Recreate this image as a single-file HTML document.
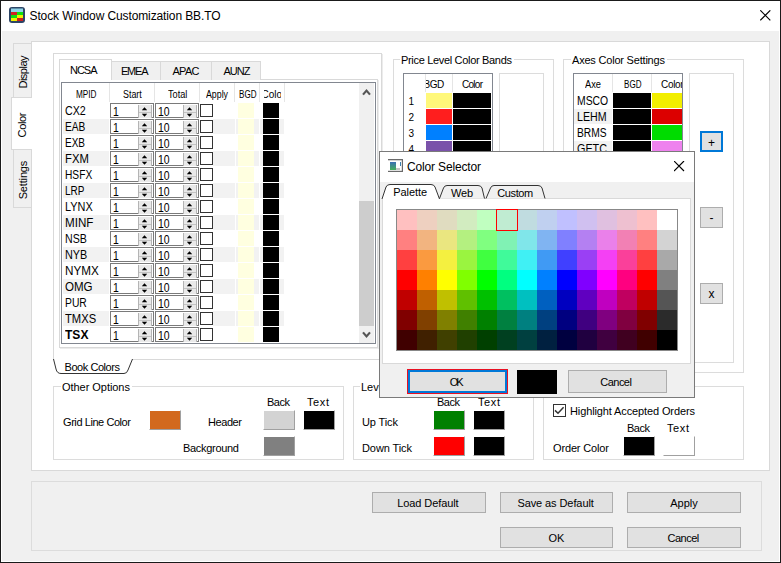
<!DOCTYPE html>
<html><head><meta charset="utf-8"><style>
html,body{margin:0;padding:0;}
body{width:781px;height:563px;position:relative;overflow:hidden;font-family:"Liberation Sans",sans-serif;background:#f0f0f0;}
body>div,body>svg{position:absolute;}
.t{position:absolute;white-space:nowrap;}
</style></head><body>
<div style="left:0px;top:0px;width:781px;height:563px;background:#f0f0f0;"></div>
<div style="left:0px;top:0px;width:781px;height:31px;background:#fff;"></div>
<div style="left:0px;top:0px;width:781px;height:563px;box-sizing:border-box;border:1px solid #1a1a1a;"></div>
<div style="left:1px;top:31px;width:1px;height:531px;background:#fff;"></div>
<div style="left:779px;top:31px;width:1px;height:531px;background:#fff;"></div>
<div style="left:1px;top:561px;width:779px;height:1px;background:#fff;"></div>
<svg style="left:9px;top:7px" width="16" height="16" viewBox="0 0 16 16">
<rect x="0" y="0" width="16" height="16" rx="3" fill="#2d4566"/>
<rect x="2" y="1.5" width="12" height="3.5" fill="#8fd3e8"/>
<rect x="2" y="5" width="6" height="3" fill="#d42020"/><rect x="8" y="5" width="6" height="3" fill="#10e010"/>
<rect x="2" y="8" width="6" height="3" fill="#10e010"/><rect x="8" y="8" width="6" height="3" fill="#f0f000"/>
<rect x="2" y="11" width="6" height="3" fill="#f0f000"/><rect x="8" y="11" width="6" height="3" fill="#c82020"/>
</svg>
<div class="t" style="left:29.50px;top:7.84px;font-size:12px;line-height:16px;color:#000;letter-spacing:-0.112px;">Stock Window Customization BB.TO</div>
<svg style="left:760px;top:10px" width="11" height="11" viewBox="0 0 11 11"><path d="M0.3 0.3L10.3 10.3M10.3 0.3L0.3 10.3" stroke="#000" stroke-width="1.15"/></svg>
<div style="left:13px;top:43px;width:19px;height:55px;background:#f0f0f0;box-sizing:border-box;border:1px solid #d9d9d9;"></div>
<div style="left:13px;top:148px;width:19px;height:60px;background:#f0f0f0;box-sizing:border-box;border:1px solid #d9d9d9;"></div>
<div style="left:31px;top:41px;width:739px;height:430px;background:#fff;box-sizing:border-box;border:1px solid #d9d9d9;"></div>
<div style="left:11px;top:97px;width:21px;height:53px;background:#fff;box-sizing:border-box;border:1px solid #d9d9d9;border-right:none;"></div>
<div class="t" style="left:-37px;top:63.5px;width:120px;text-align:center;font-size:11px;line-height:16px;letter-spacing:-0.509px;text-indent:-0.509px;transform:rotate(-90deg);">Display</div>
<div class="t" style="left:-38px;top:116.5px;width:120px;text-align:center;font-size:11px;line-height:16px;letter-spacing:-0.356px;text-indent:-0.356px;transform:rotate(-90deg);">Color</div>
<div class="t" style="left:-37px;top:172px;width:120px;text-align:center;font-size:11px;line-height:16px;letter-spacing:-0.160px;text-indent:-0.160px;transform:rotate(-90deg);">Settings</div>
<div style="left:53px;top:53px;width:329px;height:307px;box-sizing:border-box;border:1px solid #d9d9d9;border-bottom:none;"></div>
<div style="left:382px;top:54px;width:1px;height:306px;background:#ececec;"></div>
<div style="left:131px;top:359px;width:251px;height:1px;background:#d9d9d9;"></div>
<svg style="left:50px;top:355px" width="90" height="22" viewBox="0 0 90 22"><path d="M3.5 4 L6 14 Q7 18.5 11 18.5 L74 18.5 Q77 18.5 78 15 L82.5 4" fill="#fff" stroke="#333" stroke-width="1"/></svg>
<div class="t" style="left:64.50px;top:359.69px;font-size:11px;line-height:15px;color:#000;letter-spacing:-0.444px;">Book Colors</div>
<div style="left:59px;top:79px;width:319px;height:269px;box-sizing:border-box;border:1px solid #d9d9d9;"></div>
<div style="left:378px;top:80px;width:1px;height:269px;background:#ececec;"></div>
<div style="left:60px;top:348px;width:319px;height:1px;background:#ececec;"></div>
<div style="left:111px;top:61px;width:50px;height:19px;background:#f0f0f0;box-sizing:border-box;border:1px solid #d9d9d9;border-bottom:none;"></div>
<div style="left:160px;top:61px;width:52px;height:19px;background:#f0f0f0;box-sizing:border-box;border:1px solid #d9d9d9;border-bottom:none;"></div>
<div style="left:211px;top:61px;width:50px;height:19px;background:#f0f0f0;box-sizing:border-box;border:1px solid #d9d9d9;border-bottom:none;"></div>
<div style="left:59px;top:59px;width:53px;height:21px;background:#fff;box-sizing:border-box;border:1px solid #d9d9d9;border-bottom:none;"></div>
<div class="t" style="left:70.00px;top:63.19px;font-size:11px;line-height:15px;color:#000;letter-spacing:-1.021px;">NCSA</div>
<div class="t" style="left:121.00px;top:63.69px;font-size:11px;line-height:15px;color:#000;letter-spacing:-1.229px;">EMEA</div>
<div class="t" style="left:172.50px;top:63.69px;font-size:11px;line-height:15px;color:#000;letter-spacing:-0.719px;">APAC</div>
<div class="t" style="left:223.50px;top:63.69px;font-size:11px;line-height:15px;color:#000;letter-spacing:-0.979px;">AUNZ</div>
<div style="left:61px;top:82px;width:315px;height:262px;background:#fff;box-sizing:border-box;border:1px solid #828790;"></div>
<div style="left:109px;top:83px;width:1px;height:19px;background:#e5e5e5;"></div>
<div style="left:154px;top:83px;width:1px;height:19px;background:#e5e5e5;"></div>
<div style="left:199px;top:83px;width:1px;height:19px;background:#e5e5e5;"></div>
<div style="left:234px;top:83px;width:1px;height:19px;background:#e5e5e5;"></div>
<div style="left:259px;top:83px;width:1px;height:19px;background:#e5e5e5;"></div>
<div style="left:284px;top:83px;width:1px;height:19px;background:#e5e5e5;"></div>
<div class="t" style="left:75.60px;top:87.53px;font-size:10px;line-height:14px;color:#000;transform:scaleX(0.82);transform-origin:0 0;">MPID</div>
<div class="t" style="left:123.40px;top:87.53px;font-size:10px;line-height:14px;color:#000;transform:scaleX(0.8899408284023669);transform-origin:0 0;">Start</div>
<div class="t" style="left:167.60px;top:87.53px;font-size:10px;line-height:14px;color:#000;transform:scaleX(0.9183431952662722);transform-origin:0 0;">Total</div>
<div class="t" style="left:206.30px;top:87.53px;font-size:10px;line-height:14px;color:#000;transform:scaleX(0.8794503435352904);transform-origin:0 0;">Apply</div>
<div class="t" style="left:239.00px;top:87.53px;font-size:10px;line-height:14px;color:#000;transform:scaleX(0.8074981975486661);transform-origin:0 0;">BGD</div>
<div style="left:264px;top:83px;width:17px;height:18px;overflow:hidden"><div class="t" style="left:-2.5px;top:5px;font-size:10px;line-height:14px;letter-spacing:0px">Color</div></div>
<div class="t" style="left:65.20px;top:102.84px;font-size:12px;line-height:16px;color:#000;transform:scaleX(0.8910307898259706);transform-origin:0 0;">CX2</div>
<div style="left:110px;top:103px;width:44px;height:15px;background:#fff;box-sizing:border-box;border:1px solid #7a7a7a;"></div>
<div style="left:138px;top:105px;width:14px;height:13px;background:#e9e9e9;border-left:1px solid #b4b4b4;border-right:1px solid #b4b4b4;box-sizing:border-box;"></div>
<div style="left:139px;top:112px;width:12px;height:1px;background:#c4c4c4;"></div>
<svg style="left:142px;top:107px" width="5" height="10" viewBox="0 0 5 10"><path d="M-0.2 3.2L5.2 3.2L2.5 0.2Z M-0.2 6.8L5.2 6.8L2.5 9.8Z" fill="#000"/></svg>
<div class="t" style="left:112.50px;top:103.84px;font-size:12px;line-height:16px;color:#000;transform:scaleX(0.87);transform-origin:0 0;">1</div>
<div style="left:155px;top:103px;width:44px;height:15px;background:#fff;box-sizing:border-box;border:1px solid #7a7a7a;"></div>
<div style="left:183px;top:105px;width:14px;height:13px;background:#e9e9e9;border-left:1px solid #b4b4b4;border-right:1px solid #b4b4b4;box-sizing:border-box;"></div>
<div style="left:184px;top:112px;width:12px;height:1px;background:#c4c4c4;"></div>
<svg style="left:187px;top:107px" width="5" height="10" viewBox="0 0 5 10"><path d="M-0.2 3.2L5.2 3.2L2.5 0.2Z M-0.2 6.8L5.2 6.8L2.5 9.8Z" fill="#000"/></svg>
<div class="t" style="left:157.50px;top:103.84px;font-size:12px;line-height:16px;color:#000;transform:scaleX(0.87);transform-origin:0 0;">10</div>
<div style="left:200px;top:104px;width:13px;height:13px;background:#fff;box-sizing:border-box;border:1px solid #333;"></div>
<div style="left:238px;top:103px;width:16px;height:15px;background:#ffffe0;"></div>
<div style="left:263px;top:103px;width:16px;height:15px;background:#000;"></div>
<div style="left:63px;top:119px;width:46px;height:15px;background:#f2f2f2;"></div>
<div style="left:213px;top:119px;width:22px;height:15px;background:#f2f2f2;"></div>
<div style="left:236px;top:119px;width:23px;height:15px;background:#f2f2f2;"></div>
<div style="left:260px;top:119px;width:24px;height:15px;background:#f2f2f2;"></div>
<div class="t" style="left:65.20px;top:118.84px;font-size:12px;line-height:16px;color:#000;transform:scaleX(0.8458333333333333);transform-origin:0 0;">EAB</div>
<div style="left:110px;top:119px;width:44px;height:15px;background:#fff;box-sizing:border-box;border:1px solid #7a7a7a;"></div>
<div style="left:138px;top:121px;width:14px;height:13px;background:#e9e9e9;border-left:1px solid #b4b4b4;border-right:1px solid #b4b4b4;box-sizing:border-box;"></div>
<div style="left:139px;top:128px;width:12px;height:1px;background:#c4c4c4;"></div>
<svg style="left:142px;top:123px" width="5" height="10" viewBox="0 0 5 10"><path d="M-0.2 3.2L5.2 3.2L2.5 0.2Z M-0.2 6.8L5.2 6.8L2.5 9.8Z" fill="#000"/></svg>
<div class="t" style="left:112.50px;top:119.84px;font-size:12px;line-height:16px;color:#000;transform:scaleX(0.87);transform-origin:0 0;">1</div>
<div style="left:155px;top:119px;width:44px;height:15px;background:#fff;box-sizing:border-box;border:1px solid #7a7a7a;"></div>
<div style="left:183px;top:121px;width:14px;height:13px;background:#e9e9e9;border-left:1px solid #b4b4b4;border-right:1px solid #b4b4b4;box-sizing:border-box;"></div>
<div style="left:184px;top:128px;width:12px;height:1px;background:#c4c4c4;"></div>
<svg style="left:187px;top:123px" width="5" height="10" viewBox="0 0 5 10"><path d="M-0.2 3.2L5.2 3.2L2.5 0.2Z M-0.2 6.8L5.2 6.8L2.5 9.8Z" fill="#000"/></svg>
<div class="t" style="left:157.50px;top:119.84px;font-size:12px;line-height:16px;color:#000;transform:scaleX(0.87);transform-origin:0 0;">10</div>
<div style="left:200px;top:120px;width:13px;height:13px;background:#fff;box-sizing:border-box;border:1px solid #333;"></div>
<div style="left:238px;top:119px;width:16px;height:15px;background:#ffffe0;"></div>
<div style="left:263px;top:119px;width:16px;height:15px;background:#000;"></div>
<div class="t" style="left:65.20px;top:134.84px;font-size:12px;line-height:16px;color:#000;transform:scaleX(0.8333333333333334);transform-origin:0 0;">EXB</div>
<div style="left:110px;top:135px;width:44px;height:15px;background:#fff;box-sizing:border-box;border:1px solid #7a7a7a;"></div>
<div style="left:138px;top:137px;width:14px;height:13px;background:#e9e9e9;border-left:1px solid #b4b4b4;border-right:1px solid #b4b4b4;box-sizing:border-box;"></div>
<div style="left:139px;top:144px;width:12px;height:1px;background:#c4c4c4;"></div>
<svg style="left:142px;top:139px" width="5" height="10" viewBox="0 0 5 10"><path d="M-0.2 3.2L5.2 3.2L2.5 0.2Z M-0.2 6.8L5.2 6.8L2.5 9.8Z" fill="#000"/></svg>
<div class="t" style="left:112.50px;top:135.84px;font-size:12px;line-height:16px;color:#000;transform:scaleX(0.87);transform-origin:0 0;">1</div>
<div style="left:155px;top:135px;width:44px;height:15px;background:#fff;box-sizing:border-box;border:1px solid #7a7a7a;"></div>
<div style="left:183px;top:137px;width:14px;height:13px;background:#e9e9e9;border-left:1px solid #b4b4b4;border-right:1px solid #b4b4b4;box-sizing:border-box;"></div>
<div style="left:184px;top:144px;width:12px;height:1px;background:#c4c4c4;"></div>
<svg style="left:187px;top:139px" width="5" height="10" viewBox="0 0 5 10"><path d="M-0.2 3.2L5.2 3.2L2.5 0.2Z M-0.2 6.8L5.2 6.8L2.5 9.8Z" fill="#000"/></svg>
<div class="t" style="left:157.50px;top:135.84px;font-size:12px;line-height:16px;color:#000;transform:scaleX(0.87);transform-origin:0 0;">10</div>
<div style="left:200px;top:136px;width:13px;height:13px;background:#fff;box-sizing:border-box;border:1px solid #333;"></div>
<div style="left:238px;top:135px;width:16px;height:15px;background:#ffffe0;"></div>
<div style="left:263px;top:135px;width:16px;height:15px;background:#000;"></div>
<div style="left:63px;top:151px;width:46px;height:15px;background:#f2f2f2;"></div>
<div style="left:213px;top:151px;width:22px;height:15px;background:#f2f2f2;"></div>
<div style="left:236px;top:151px;width:23px;height:15px;background:#f2f2f2;"></div>
<div style="left:260px;top:151px;width:24px;height:15px;background:#f2f2f2;"></div>
<div class="t" style="left:65.20px;top:150.84px;font-size:12px;line-height:16px;color:#000;transform:scaleX(0.9396668723010487);transform-origin:0 0;">FXM</div>
<div style="left:110px;top:151px;width:44px;height:15px;background:#fff;box-sizing:border-box;border:1px solid #7a7a7a;"></div>
<div style="left:138px;top:153px;width:14px;height:13px;background:#e9e9e9;border-left:1px solid #b4b4b4;border-right:1px solid #b4b4b4;box-sizing:border-box;"></div>
<div style="left:139px;top:160px;width:12px;height:1px;background:#c4c4c4;"></div>
<svg style="left:142px;top:155px" width="5" height="10" viewBox="0 0 5 10"><path d="M-0.2 3.2L5.2 3.2L2.5 0.2Z M-0.2 6.8L5.2 6.8L2.5 9.8Z" fill="#000"/></svg>
<div class="t" style="left:112.50px;top:151.84px;font-size:12px;line-height:16px;color:#000;transform:scaleX(0.87);transform-origin:0 0;">1</div>
<div style="left:155px;top:151px;width:44px;height:15px;background:#fff;box-sizing:border-box;border:1px solid #7a7a7a;"></div>
<div style="left:183px;top:153px;width:14px;height:13px;background:#e9e9e9;border-left:1px solid #b4b4b4;border-right:1px solid #b4b4b4;box-sizing:border-box;"></div>
<div style="left:184px;top:160px;width:12px;height:1px;background:#c4c4c4;"></div>
<svg style="left:187px;top:155px" width="5" height="10" viewBox="0 0 5 10"><path d="M-0.2 3.2L5.2 3.2L2.5 0.2Z M-0.2 6.8L5.2 6.8L2.5 9.8Z" fill="#000"/></svg>
<div class="t" style="left:157.50px;top:151.84px;font-size:12px;line-height:16px;color:#000;transform:scaleX(0.87);transform-origin:0 0;">10</div>
<div style="left:200px;top:152px;width:13px;height:13px;background:#fff;box-sizing:border-box;border:1px solid #333;"></div>
<div style="left:238px;top:151px;width:16px;height:15px;background:#ffffe0;"></div>
<div style="left:263px;top:151px;width:16px;height:15px;background:#000;"></div>
<div class="t" style="left:65.20px;top:166.84px;font-size:12px;line-height:16px;color:#000;transform:scaleX(0.85);transform-origin:0 0;">HSFX</div>
<div style="left:110px;top:167px;width:44px;height:15px;background:#fff;box-sizing:border-box;border:1px solid #7a7a7a;"></div>
<div style="left:138px;top:169px;width:14px;height:13px;background:#e9e9e9;border-left:1px solid #b4b4b4;border-right:1px solid #b4b4b4;box-sizing:border-box;"></div>
<div style="left:139px;top:176px;width:12px;height:1px;background:#c4c4c4;"></div>
<svg style="left:142px;top:171px" width="5" height="10" viewBox="0 0 5 10"><path d="M-0.2 3.2L5.2 3.2L2.5 0.2Z M-0.2 6.8L5.2 6.8L2.5 9.8Z" fill="#000"/></svg>
<div class="t" style="left:112.50px;top:167.84px;font-size:12px;line-height:16px;color:#000;transform:scaleX(0.87);transform-origin:0 0;">1</div>
<div style="left:155px;top:167px;width:44px;height:15px;background:#fff;box-sizing:border-box;border:1px solid #7a7a7a;"></div>
<div style="left:183px;top:169px;width:14px;height:13px;background:#e9e9e9;border-left:1px solid #b4b4b4;border-right:1px solid #b4b4b4;box-sizing:border-box;"></div>
<div style="left:184px;top:176px;width:12px;height:1px;background:#c4c4c4;"></div>
<svg style="left:187px;top:171px" width="5" height="10" viewBox="0 0 5 10"><path d="M-0.2 3.2L5.2 3.2L2.5 0.2Z M-0.2 6.8L5.2 6.8L2.5 9.8Z" fill="#000"/></svg>
<div class="t" style="left:157.50px;top:167.84px;font-size:12px;line-height:16px;color:#000;transform:scaleX(0.87);transform-origin:0 0;">10</div>
<div style="left:200px;top:168px;width:13px;height:13px;background:#fff;box-sizing:border-box;border:1px solid #333;"></div>
<div style="left:238px;top:167px;width:16px;height:15px;background:#ffffe0;"></div>
<div style="left:263px;top:167px;width:16px;height:15px;background:#000;"></div>
<div style="left:63px;top:183px;width:46px;height:15px;background:#f2f2f2;"></div>
<div style="left:213px;top:183px;width:22px;height:15px;background:#f2f2f2;"></div>
<div style="left:236px;top:183px;width:23px;height:15px;background:#f2f2f2;"></div>
<div style="left:260px;top:183px;width:24px;height:15px;background:#f2f2f2;"></div>
<div class="t" style="left:65.20px;top:182.84px;font-size:12px;line-height:16px;color:#000;transform:scaleX(0.831057563587684);transform-origin:0 0;">LRP</div>
<div style="left:110px;top:183px;width:44px;height:15px;background:#fff;box-sizing:border-box;border:1px solid #7a7a7a;"></div>
<div style="left:138px;top:185px;width:14px;height:13px;background:#e9e9e9;border-left:1px solid #b4b4b4;border-right:1px solid #b4b4b4;box-sizing:border-box;"></div>
<div style="left:139px;top:192px;width:12px;height:1px;background:#c4c4c4;"></div>
<svg style="left:142px;top:187px" width="5" height="10" viewBox="0 0 5 10"><path d="M-0.2 3.2L5.2 3.2L2.5 0.2Z M-0.2 6.8L5.2 6.8L2.5 9.8Z" fill="#000"/></svg>
<div class="t" style="left:112.50px;top:183.84px;font-size:12px;line-height:16px;color:#000;transform:scaleX(0.87);transform-origin:0 0;">1</div>
<div style="left:155px;top:183px;width:44px;height:15px;background:#fff;box-sizing:border-box;border:1px solid #7a7a7a;"></div>
<div style="left:183px;top:185px;width:14px;height:13px;background:#e9e9e9;border-left:1px solid #b4b4b4;border-right:1px solid #b4b4b4;box-sizing:border-box;"></div>
<div style="left:184px;top:192px;width:12px;height:1px;background:#c4c4c4;"></div>
<svg style="left:187px;top:187px" width="5" height="10" viewBox="0 0 5 10"><path d="M-0.2 3.2L5.2 3.2L2.5 0.2Z M-0.2 6.8L5.2 6.8L2.5 9.8Z" fill="#000"/></svg>
<div class="t" style="left:157.50px;top:183.84px;font-size:12px;line-height:16px;color:#000;transform:scaleX(0.87);transform-origin:0 0;">10</div>
<div style="left:200px;top:184px;width:13px;height:13px;background:#fff;box-sizing:border-box;border:1px solid #333;"></div>
<div style="left:238px;top:183px;width:16px;height:15px;background:#ffffe0;"></div>
<div style="left:263px;top:183px;width:16px;height:15px;background:#000;"></div>
<div class="t" style="left:65.20px;top:198.84px;font-size:12px;line-height:16px;color:#000;transform:scaleX(0.9095946639302206);transform-origin:0 0;">LYNX</div>
<div style="left:110px;top:199px;width:44px;height:15px;background:#fff;box-sizing:border-box;border:1px solid #7a7a7a;"></div>
<div style="left:138px;top:201px;width:14px;height:13px;background:#e9e9e9;border-left:1px solid #b4b4b4;border-right:1px solid #b4b4b4;box-sizing:border-box;"></div>
<div style="left:139px;top:208px;width:12px;height:1px;background:#c4c4c4;"></div>
<svg style="left:142px;top:203px" width="5" height="10" viewBox="0 0 5 10"><path d="M-0.2 3.2L5.2 3.2L2.5 0.2Z M-0.2 6.8L5.2 6.8L2.5 9.8Z" fill="#000"/></svg>
<div class="t" style="left:112.50px;top:199.84px;font-size:12px;line-height:16px;color:#000;transform:scaleX(0.87);transform-origin:0 0;">1</div>
<div style="left:155px;top:199px;width:44px;height:15px;background:#fff;box-sizing:border-box;border:1px solid #7a7a7a;"></div>
<div style="left:183px;top:201px;width:14px;height:13px;background:#e9e9e9;border-left:1px solid #b4b4b4;border-right:1px solid #b4b4b4;box-sizing:border-box;"></div>
<div style="left:184px;top:208px;width:12px;height:1px;background:#c4c4c4;"></div>
<svg style="left:187px;top:203px" width="5" height="10" viewBox="0 0 5 10"><path d="M-0.2 3.2L5.2 3.2L2.5 0.2Z M-0.2 6.8L5.2 6.8L2.5 9.8Z" fill="#000"/></svg>
<div class="t" style="left:157.50px;top:199.84px;font-size:12px;line-height:16px;color:#000;transform:scaleX(0.87);transform-origin:0 0;">10</div>
<div style="left:200px;top:200px;width:13px;height:13px;background:#fff;box-sizing:border-box;border:1px solid #333;"></div>
<div style="left:238px;top:199px;width:16px;height:15px;background:#ffffe0;"></div>
<div style="left:263px;top:199px;width:16px;height:15px;background:#000;"></div>
<div style="left:63px;top:215px;width:46px;height:15px;background:#f2f2f2;"></div>
<div style="left:213px;top:215px;width:22px;height:15px;background:#f2f2f2;"></div>
<div style="left:236px;top:215px;width:23px;height:15px;background:#f2f2f2;"></div>
<div style="left:260px;top:215px;width:24px;height:15px;background:#f2f2f2;"></div>
<div class="t" style="left:65.20px;top:214.84px;font-size:12px;line-height:16px;color:#000;transform:scaleX(0.9683537559936067);transform-origin:0 0;">MINF</div>
<div style="left:110px;top:215px;width:44px;height:15px;background:#fff;box-sizing:border-box;border:1px solid #7a7a7a;"></div>
<div style="left:138px;top:217px;width:14px;height:13px;background:#e9e9e9;border-left:1px solid #b4b4b4;border-right:1px solid #b4b4b4;box-sizing:border-box;"></div>
<div style="left:139px;top:224px;width:12px;height:1px;background:#c4c4c4;"></div>
<svg style="left:142px;top:219px" width="5" height="10" viewBox="0 0 5 10"><path d="M-0.2 3.2L5.2 3.2L2.5 0.2Z M-0.2 6.8L5.2 6.8L2.5 9.8Z" fill="#000"/></svg>
<div class="t" style="left:112.50px;top:215.84px;font-size:12px;line-height:16px;color:#000;transform:scaleX(0.87);transform-origin:0 0;">1</div>
<div style="left:155px;top:215px;width:44px;height:15px;background:#fff;box-sizing:border-box;border:1px solid #7a7a7a;"></div>
<div style="left:183px;top:217px;width:14px;height:13px;background:#e9e9e9;border-left:1px solid #b4b4b4;border-right:1px solid #b4b4b4;box-sizing:border-box;"></div>
<div style="left:184px;top:224px;width:12px;height:1px;background:#c4c4c4;"></div>
<svg style="left:187px;top:219px" width="5" height="10" viewBox="0 0 5 10"><path d="M-0.2 3.2L5.2 3.2L2.5 0.2Z M-0.2 6.8L5.2 6.8L2.5 9.8Z" fill="#000"/></svg>
<div class="t" style="left:157.50px;top:215.84px;font-size:12px;line-height:16px;color:#000;transform:scaleX(0.87);transform-origin:0 0;">10</div>
<div style="left:200px;top:216px;width:13px;height:13px;background:#fff;box-sizing:border-box;border:1px solid #333;"></div>
<div style="left:238px;top:215px;width:16px;height:15px;background:#ffffe0;"></div>
<div style="left:263px;top:215px;width:16px;height:15px;background:#000;"></div>
<div class="t" style="left:65.20px;top:230.84px;font-size:12px;line-height:16px;color:#000;transform:scaleX(0.8835972134262191);transform-origin:0 0;">NSB</div>
<div style="left:110px;top:231px;width:44px;height:15px;background:#fff;box-sizing:border-box;border:1px solid #7a7a7a;"></div>
<div style="left:138px;top:233px;width:14px;height:13px;background:#e9e9e9;border-left:1px solid #b4b4b4;border-right:1px solid #b4b4b4;box-sizing:border-box;"></div>
<div style="left:139px;top:240px;width:12px;height:1px;background:#c4c4c4;"></div>
<svg style="left:142px;top:235px" width="5" height="10" viewBox="0 0 5 10"><path d="M-0.2 3.2L5.2 3.2L2.5 0.2Z M-0.2 6.8L5.2 6.8L2.5 9.8Z" fill="#000"/></svg>
<div class="t" style="left:112.50px;top:231.84px;font-size:12px;line-height:16px;color:#000;transform:scaleX(0.87);transform-origin:0 0;">1</div>
<div style="left:155px;top:231px;width:44px;height:15px;background:#fff;box-sizing:border-box;border:1px solid #7a7a7a;"></div>
<div style="left:183px;top:233px;width:14px;height:13px;background:#e9e9e9;border-left:1px solid #b4b4b4;border-right:1px solid #b4b4b4;box-sizing:border-box;"></div>
<div style="left:184px;top:240px;width:12px;height:1px;background:#c4c4c4;"></div>
<svg style="left:187px;top:235px" width="5" height="10" viewBox="0 0 5 10"><path d="M-0.2 3.2L5.2 3.2L2.5 0.2Z M-0.2 6.8L5.2 6.8L2.5 9.8Z" fill="#000"/></svg>
<div class="t" style="left:157.50px;top:231.84px;font-size:12px;line-height:16px;color:#000;transform:scaleX(0.87);transform-origin:0 0;">10</div>
<div style="left:200px;top:232px;width:13px;height:13px;background:#fff;box-sizing:border-box;border:1px solid #333;"></div>
<div style="left:238px;top:231px;width:16px;height:15px;background:#ffffe0;"></div>
<div style="left:263px;top:231px;width:16px;height:15px;background:#000;"></div>
<div style="left:63px;top:247px;width:46px;height:15px;background:#f2f2f2;"></div>
<div style="left:213px;top:247px;width:22px;height:15px;background:#f2f2f2;"></div>
<div style="left:236px;top:247px;width:23px;height:15px;background:#f2f2f2;"></div>
<div style="left:260px;top:247px;width:24px;height:15px;background:#f2f2f2;"></div>
<div class="t" style="left:65.20px;top:246.84px;font-size:12px;line-height:16px;color:#000;transform:scaleX(0.8998100063331222);transform-origin:0 0;">NYB</div>
<div style="left:110px;top:247px;width:44px;height:15px;background:#fff;box-sizing:border-box;border:1px solid #7a7a7a;"></div>
<div style="left:138px;top:249px;width:14px;height:13px;background:#e9e9e9;border-left:1px solid #b4b4b4;border-right:1px solid #b4b4b4;box-sizing:border-box;"></div>
<div style="left:139px;top:256px;width:12px;height:1px;background:#c4c4c4;"></div>
<svg style="left:142px;top:251px" width="5" height="10" viewBox="0 0 5 10"><path d="M-0.2 3.2L5.2 3.2L2.5 0.2Z M-0.2 6.8L5.2 6.8L2.5 9.8Z" fill="#000"/></svg>
<div class="t" style="left:112.50px;top:247.84px;font-size:12px;line-height:16px;color:#000;transform:scaleX(0.87);transform-origin:0 0;">1</div>
<div style="left:155px;top:247px;width:44px;height:15px;background:#fff;box-sizing:border-box;border:1px solid #7a7a7a;"></div>
<div style="left:183px;top:249px;width:14px;height:13px;background:#e9e9e9;border-left:1px solid #b4b4b4;border-right:1px solid #b4b4b4;box-sizing:border-box;"></div>
<div style="left:184px;top:256px;width:12px;height:1px;background:#c4c4c4;"></div>
<svg style="left:187px;top:251px" width="5" height="10" viewBox="0 0 5 10"><path d="M-0.2 3.2L5.2 3.2L2.5 0.2Z M-0.2 6.8L5.2 6.8L2.5 9.8Z" fill="#000"/></svg>
<div class="t" style="left:157.50px;top:247.84px;font-size:12px;line-height:16px;color:#000;transform:scaleX(0.87);transform-origin:0 0;">10</div>
<div style="left:200px;top:248px;width:13px;height:13px;background:#fff;box-sizing:border-box;border:1px solid #333;"></div>
<div style="left:238px;top:247px;width:16px;height:15px;background:#ffffe0;"></div>
<div style="left:263px;top:247px;width:16px;height:15px;background:#000;"></div>
<div class="t" style="left:65.20px;top:262.84px;font-size:12px;line-height:16px;color:#000;transform:scaleX(0.9748535376295628);transform-origin:0 0;">NYMX</div>
<div style="left:110px;top:263px;width:44px;height:15px;background:#fff;box-sizing:border-box;border:1px solid #7a7a7a;"></div>
<div style="left:138px;top:265px;width:14px;height:13px;background:#e9e9e9;border-left:1px solid #b4b4b4;border-right:1px solid #b4b4b4;box-sizing:border-box;"></div>
<div style="left:139px;top:272px;width:12px;height:1px;background:#c4c4c4;"></div>
<svg style="left:142px;top:267px" width="5" height="10" viewBox="0 0 5 10"><path d="M-0.2 3.2L5.2 3.2L2.5 0.2Z M-0.2 6.8L5.2 6.8L2.5 9.8Z" fill="#000"/></svg>
<div class="t" style="left:112.50px;top:263.84px;font-size:12px;line-height:16px;color:#000;transform:scaleX(0.87);transform-origin:0 0;">1</div>
<div style="left:155px;top:263px;width:44px;height:15px;background:#fff;box-sizing:border-box;border:1px solid #7a7a7a;"></div>
<div style="left:183px;top:265px;width:14px;height:13px;background:#e9e9e9;border-left:1px solid #b4b4b4;border-right:1px solid #b4b4b4;box-sizing:border-box;"></div>
<div style="left:184px;top:272px;width:12px;height:1px;background:#c4c4c4;"></div>
<svg style="left:187px;top:267px" width="5" height="10" viewBox="0 0 5 10"><path d="M-0.2 3.2L5.2 3.2L2.5 0.2Z M-0.2 6.8L5.2 6.8L2.5 9.8Z" fill="#000"/></svg>
<div class="t" style="left:157.50px;top:263.84px;font-size:12px;line-height:16px;color:#000;transform:scaleX(0.87);transform-origin:0 0;">10</div>
<div style="left:200px;top:264px;width:13px;height:13px;background:#fff;box-sizing:border-box;border:1px solid #333;"></div>
<div style="left:238px;top:263px;width:16px;height:15px;background:#ffffe0;"></div>
<div style="left:263px;top:263px;width:16px;height:15px;background:#000;"></div>
<div style="left:63px;top:279px;width:46px;height:15px;background:#f2f2f2;"></div>
<div style="left:213px;top:279px;width:22px;height:15px;background:#f2f2f2;"></div>
<div style="left:236px;top:279px;width:23px;height:15px;background:#f2f2f2;"></div>
<div style="left:260px;top:279px;width:24px;height:15px;background:#f2f2f2;"></div>
<div class="t" style="left:65.20px;top:278.84px;font-size:12px;line-height:16px;color:#000;transform:scaleX(0.9631406761177754);transform-origin:0 0;">OMG</div>
<div style="left:110px;top:279px;width:44px;height:15px;background:#fff;box-sizing:border-box;border:1px solid #7a7a7a;"></div>
<div style="left:138px;top:281px;width:14px;height:13px;background:#e9e9e9;border-left:1px solid #b4b4b4;border-right:1px solid #b4b4b4;box-sizing:border-box;"></div>
<div style="left:139px;top:288px;width:12px;height:1px;background:#c4c4c4;"></div>
<svg style="left:142px;top:283px" width="5" height="10" viewBox="0 0 5 10"><path d="M-0.2 3.2L5.2 3.2L2.5 0.2Z M-0.2 6.8L5.2 6.8L2.5 9.8Z" fill="#000"/></svg>
<div class="t" style="left:112.50px;top:279.84px;font-size:12px;line-height:16px;color:#000;transform:scaleX(0.87);transform-origin:0 0;">1</div>
<div style="left:155px;top:279px;width:44px;height:15px;background:#fff;box-sizing:border-box;border:1px solid #7a7a7a;"></div>
<div style="left:183px;top:281px;width:14px;height:13px;background:#e9e9e9;border-left:1px solid #b4b4b4;border-right:1px solid #b4b4b4;box-sizing:border-box;"></div>
<div style="left:184px;top:288px;width:12px;height:1px;background:#c4c4c4;"></div>
<svg style="left:187px;top:283px" width="5" height="10" viewBox="0 0 5 10"><path d="M-0.2 3.2L5.2 3.2L2.5 0.2Z M-0.2 6.8L5.2 6.8L2.5 9.8Z" fill="#000"/></svg>
<div class="t" style="left:157.50px;top:279.84px;font-size:12px;line-height:16px;color:#000;transform:scaleX(0.87);transform-origin:0 0;">10</div>
<div style="left:200px;top:280px;width:13px;height:13px;background:#fff;box-sizing:border-box;border:1px solid #333;"></div>
<div style="left:238px;top:279px;width:16px;height:15px;background:#ffffe0;"></div>
<div style="left:263px;top:279px;width:16px;height:15px;background:#000;"></div>
<div class="t" style="left:65.20px;top:294.84px;font-size:12px;line-height:16px;color:#000;transform:scaleX(0.8601726263871764);transform-origin:0 0;">PUR</div>
<div style="left:110px;top:295px;width:44px;height:15px;background:#fff;box-sizing:border-box;border:1px solid #7a7a7a;"></div>
<div style="left:138px;top:297px;width:14px;height:13px;background:#e9e9e9;border-left:1px solid #b4b4b4;border-right:1px solid #b4b4b4;box-sizing:border-box;"></div>
<div style="left:139px;top:304px;width:12px;height:1px;background:#c4c4c4;"></div>
<svg style="left:142px;top:299px" width="5" height="10" viewBox="0 0 5 10"><path d="M-0.2 3.2L5.2 3.2L2.5 0.2Z M-0.2 6.8L5.2 6.8L2.5 9.8Z" fill="#000"/></svg>
<div class="t" style="left:112.50px;top:295.84px;font-size:12px;line-height:16px;color:#000;transform:scaleX(0.87);transform-origin:0 0;">1</div>
<div style="left:155px;top:295px;width:44px;height:15px;background:#fff;box-sizing:border-box;border:1px solid #7a7a7a;"></div>
<div style="left:183px;top:297px;width:14px;height:13px;background:#e9e9e9;border-left:1px solid #b4b4b4;border-right:1px solid #b4b4b4;box-sizing:border-box;"></div>
<div style="left:184px;top:304px;width:12px;height:1px;background:#c4c4c4;"></div>
<svg style="left:187px;top:299px" width="5" height="10" viewBox="0 0 5 10"><path d="M-0.2 3.2L5.2 3.2L2.5 0.2Z M-0.2 6.8L5.2 6.8L2.5 9.8Z" fill="#000"/></svg>
<div class="t" style="left:157.50px;top:295.84px;font-size:12px;line-height:16px;color:#000;transform:scaleX(0.87);transform-origin:0 0;">10</div>
<div style="left:200px;top:296px;width:13px;height:13px;background:#fff;box-sizing:border-box;border:1px solid #333;"></div>
<div style="left:238px;top:295px;width:16px;height:15px;background:#ffffe0;"></div>
<div style="left:263px;top:295px;width:16px;height:15px;background:#000;"></div>
<div style="left:63px;top:311px;width:46px;height:15px;background:#f2f2f2;"></div>
<div style="left:213px;top:311px;width:22px;height:15px;background:#f2f2f2;"></div>
<div style="left:236px;top:311px;width:23px;height:15px;background:#f2f2f2;"></div>
<div style="left:260px;top:311px;width:24px;height:15px;background:#f2f2f2;"></div>
<div class="t" style="left:65.20px;top:310.84px;font-size:12px;line-height:16px;color:#000;transform:scaleX(0.9331458040318801);transform-origin:0 0;">TMXS</div>
<div style="left:110px;top:311px;width:44px;height:15px;background:#fff;box-sizing:border-box;border:1px solid #7a7a7a;"></div>
<div style="left:138px;top:313px;width:14px;height:13px;background:#e9e9e9;border-left:1px solid #b4b4b4;border-right:1px solid #b4b4b4;box-sizing:border-box;"></div>
<div style="left:139px;top:320px;width:12px;height:1px;background:#c4c4c4;"></div>
<svg style="left:142px;top:315px" width="5" height="10" viewBox="0 0 5 10"><path d="M-0.2 3.2L5.2 3.2L2.5 0.2Z M-0.2 6.8L5.2 6.8L2.5 9.8Z" fill="#000"/></svg>
<div class="t" style="left:112.50px;top:311.84px;font-size:12px;line-height:16px;color:#000;transform:scaleX(0.87);transform-origin:0 0;">1</div>
<div style="left:155px;top:311px;width:44px;height:15px;background:#fff;box-sizing:border-box;border:1px solid #7a7a7a;"></div>
<div style="left:183px;top:313px;width:14px;height:13px;background:#e9e9e9;border-left:1px solid #b4b4b4;border-right:1px solid #b4b4b4;box-sizing:border-box;"></div>
<div style="left:184px;top:320px;width:12px;height:1px;background:#c4c4c4;"></div>
<svg style="left:187px;top:315px" width="5" height="10" viewBox="0 0 5 10"><path d="M-0.2 3.2L5.2 3.2L2.5 0.2Z M-0.2 6.8L5.2 6.8L2.5 9.8Z" fill="#000"/></svg>
<div class="t" style="left:157.50px;top:311.84px;font-size:12px;line-height:16px;color:#000;transform:scaleX(0.87);transform-origin:0 0;">10</div>
<div style="left:200px;top:312px;width:13px;height:13px;background:#fff;box-sizing:border-box;border:1px solid #333;"></div>
<div style="left:238px;top:311px;width:16px;height:15px;background:#ffffe0;"></div>
<div style="left:263px;top:311px;width:16px;height:15px;background:#000;"></div>
<div class="t" style="left:65.20px;top:326.84px;font-size:12px;line-height:16px;color:#000;font-weight:bold;transform:scaleX(1.0030810448760883);transform-origin:0 0;">TSX</div>
<div style="left:110px;top:327px;width:44px;height:15px;background:#fff;box-sizing:border-box;border:1px solid #7a7a7a;"></div>
<div style="left:138px;top:329px;width:14px;height:13px;background:#e9e9e9;border-left:1px solid #b4b4b4;border-right:1px solid #b4b4b4;box-sizing:border-box;"></div>
<div style="left:139px;top:336px;width:12px;height:1px;background:#c4c4c4;"></div>
<svg style="left:142px;top:331px" width="5" height="10" viewBox="0 0 5 10"><path d="M-0.2 3.2L5.2 3.2L2.5 0.2Z M-0.2 6.8L5.2 6.8L2.5 9.8Z" fill="#000"/></svg>
<div class="t" style="left:112.50px;top:327.84px;font-size:12px;line-height:16px;color:#000;transform:scaleX(0.87);transform-origin:0 0;">1</div>
<div style="left:155px;top:327px;width:44px;height:15px;background:#fff;box-sizing:border-box;border:1px solid #7a7a7a;"></div>
<div style="left:183px;top:329px;width:14px;height:13px;background:#e9e9e9;border-left:1px solid #b4b4b4;border-right:1px solid #b4b4b4;box-sizing:border-box;"></div>
<div style="left:184px;top:336px;width:12px;height:1px;background:#c4c4c4;"></div>
<svg style="left:187px;top:331px" width="5" height="10" viewBox="0 0 5 10"><path d="M-0.2 3.2L5.2 3.2L2.5 0.2Z M-0.2 6.8L5.2 6.8L2.5 9.8Z" fill="#000"/></svg>
<div class="t" style="left:157.50px;top:327.84px;font-size:12px;line-height:16px;color:#000;transform:scaleX(0.87);transform-origin:0 0;">10</div>
<div style="left:200px;top:328px;width:13px;height:13px;background:#fff;box-sizing:border-box;border:1px solid #333;"></div>
<div style="left:238px;top:327px;width:16px;height:15px;background:#ffffe0;"></div>
<div style="left:263px;top:327px;width:16px;height:15px;background:#000;"></div>
<div style="left:359px;top:83px;width:15px;height:260px;background:#f0f0f0;"></div>
<div style="left:359px;top:201px;width:15px;height:125px;background:#cdcdcd;"></div>
<svg style="left:362px;top:88px" width="9" height="8" viewBox="0 0 9 8"><path d="M1 6.6L4.5 2.6L8 6.6" stroke="#555" stroke-width="2.2" fill="none"/></svg>
<svg style="left:362px;top:331px" width="9" height="8" viewBox="0 0 9 8"><path d="M1 1.4L4.5 5.4L8 1.4" stroke="#555" stroke-width="2.2" fill="none"/></svg>
<div style="left:393px;top:59px;width:161px;height:314px;box-sizing:border-box;border:1px solid #dcdcdc;"></div>
<div style="left:400px;top:58px;width:114px;height:3px;background:#fff;"></div>
<div class="t" style="left:401.00px;top:52.69px;font-size:11px;line-height:15px;color:#000;letter-spacing:-0.321px;">Price Level Color Bands</div>
<div style="left:403px;top:73px;width:90px;height:290px;background:#fff;box-sizing:border-box;border:1px solid #828790;"></div>
<div style="left:425px;top:74px;width:1px;height:18px;background:#e5e5e5;"></div>
<div style="left:452px;top:74px;width:1px;height:18px;background:#e5e5e5;"></div>
<div style="left:426px;top:74px;width:26px;height:18px;overflow:hidden"><div class="t" style="left:-2.5px;top:4px;font-size:10px;line-height:14px;letter-spacing:-0.5px">BGD</div></div>
<div class="t" style="left:462.00px;top:77.53px;font-size:10px;line-height:14px;color:#000;letter-spacing:-0.723px;">Color</div>
<div class="t" style="left:408.50px;top:94.53px;font-size:10px;line-height:14px;color:#000;">1</div>
<div style="left:426px;top:93px;width:26px;height:15px;background:#fff87a;"></div>
<div style="left:453px;top:93px;width:38px;height:15px;background:#000;"></div>
<div class="t" style="left:408.50px;top:110.53px;font-size:10px;line-height:14px;color:#000;">2</div>
<div style="left:426px;top:109px;width:26px;height:15px;background:#ff1e1e;"></div>
<div style="left:453px;top:109px;width:38px;height:15px;background:#000;"></div>
<div class="t" style="left:408.50px;top:126.53px;font-size:10px;line-height:14px;color:#000;">3</div>
<div style="left:426px;top:125px;width:26px;height:15px;background:#0080ff;"></div>
<div style="left:453px;top:125px;width:38px;height:15px;background:#000;"></div>
<div class="t" style="left:408.50px;top:142.53px;font-size:10px;line-height:14px;color:#000;">4</div>
<div style="left:426px;top:141px;width:26px;height:15px;background:#7a52aa;"></div>
<div style="left:453px;top:141px;width:38px;height:15px;background:#000;"></div>
<div class="t" style="left:408.50px;top:158.53px;font-size:10px;line-height:14px;color:#000;">5</div>
<div style="left:426px;top:157px;width:26px;height:15px;background:#00c000;"></div>
<div style="left:453px;top:157px;width:38px;height:15px;background:#000;"></div>
<div class="t" style="left:408.50px;top:174.53px;font-size:10px;line-height:14px;color:#000;">6</div>
<div style="left:426px;top:173px;width:26px;height:15px;background:#ff8000;"></div>
<div style="left:453px;top:173px;width:38px;height:15px;background:#000;"></div>
<div style="left:499px;top:73px;width:45px;height:290px;box-sizing:border-box;border:1px solid #dcdcdc;"></div>
<div style="left:563px;top:59px;width:181px;height:314px;box-sizing:border-box;border:1px solid #dcdcdc;"></div>
<div style="left:571px;top:58px;width:96px;height:3px;background:#fff;"></div>
<div class="t" style="left:572.00px;top:52.69px;font-size:11px;line-height:15px;color:#000;letter-spacing:-0.203px;">Axes Color Settings</div>
<div style="left:573px;top:73px;width:110px;height:290px;background:#fff;box-sizing:border-box;border:1px solid #828790;"></div>
<div style="left:612px;top:74px;width:1px;height:18px;background:#e5e5e5;"></div>
<div style="left:651px;top:74px;width:1px;height:18px;background:#e5e5e5;"></div>
<div class="t" style="left:585.00px;top:77.53px;font-size:10px;line-height:14px;color:#000;transform:scaleX(0.928377153218495);transform-origin:0 0;">Axe</div>
<div class="t" style="left:623.50px;top:77.53px;font-size:10px;line-height:14px;color:#000;transform:scaleX(0.8074981975486661);transform-origin:0 0;">BGD</div>
<div style="left:652px;top:74px;width:30px;height:18px;overflow:hidden"><div class="t" style="left:9px;top:4px;font-size:10px;line-height:14px;letter-spacing:-0.3px">Color</div></div>
<div class="t" style="left:577.40px;top:92.84px;font-size:12px;line-height:16px;color:#000;transform:scaleX(0.8666666666666667);transform-origin:0 0;">MSCO</div>
<div style="left:613px;top:93px;width:38px;height:15px;background:#000;"></div>
<div style="left:652px;top:93px;width:30px;height:15px;background:#f2ee00;"></div>
<div style="left:574px;top:109px;width:38px;height:15px;background:#f2f2f2;"></div>
<div class="t" style="left:577.40px;top:108.84px;font-size:12px;line-height:16px;color:#000;transform:scaleX(0.8877225866916589);transform-origin:0 0;">LEHM</div>
<div style="left:613px;top:109px;width:38px;height:15px;background:#000;"></div>
<div style="left:652px;top:109px;width:30px;height:15px;background:#dc0000;"></div>
<div class="t" style="left:577.40px;top:124.84px;font-size:12px;line-height:16px;color:#000;transform:scaleX(0.8537178909418658);transform-origin:0 0;">BRMS</div>
<div style="left:613px;top:125px;width:38px;height:15px;background:#000;"></div>
<div style="left:652px;top:125px;width:30px;height:15px;background:#00dc00;"></div>
<div style="left:574px;top:141px;width:38px;height:15px;background:#f2f2f2;"></div>
<div class="t" style="left:577.40px;top:140.84px;font-size:12px;line-height:16px;color:#000;transform:scaleX(0.90014064697609);transform-origin:0 0;">GETC</div>
<div style="left:613px;top:141px;width:38px;height:15px;background:#000;"></div>
<div style="left:652px;top:141px;width:30px;height:15px;background:#ee82ee;"></div>
<div class="t" style="left:577.40px;top:156.84px;font-size:12px;line-height:16px;color:#000;transform:scaleX(0.9375);transform-origin:0 0;">XXXX</div>
<div style="left:613px;top:157px;width:38px;height:15px;background:#000;"></div>
<div style="left:652px;top:157px;width:30px;height:15px;background:#00c0c0;"></div>
<div style="left:574px;top:173px;width:38px;height:15px;background:#f2f2f2;"></div>
<div class="t" style="left:577.40px;top:172.84px;font-size:12px;line-height:16px;color:#000;transform:scaleX(0.9375);transform-origin:0 0;">YYYY</div>
<div style="left:613px;top:173px;width:38px;height:15px;background:#000;"></div>
<div style="left:652px;top:173px;width:30px;height:15px;background:#c0c0c0;"></div>
<div style="left:689px;top:73px;width:45px;height:290px;box-sizing:border-box;border:1px solid #dcdcdc;"></div>
<div style="left:700px;top:131px;width:23px;height:21px;background:#e1e1e1;box-sizing:border-box;border:2px solid #0078d7;"></div>
<div class="t" style="left:707.99px;top:134.84px;font-size:12px;line-height:16px;color:#000;">+</div>
<div style="left:700px;top:207px;width:23px;height:21px;background:#e1e1e1;box-sizing:border-box;border:1px solid #adadad;"></div>
<div class="t" style="left:709.50px;top:209.84px;font-size:12px;line-height:16px;color:#000;">-</div>
<div style="left:700px;top:283px;width:23px;height:21px;background:#e1e1e1;box-sizing:border-box;border:1px solid #adadad;"></div>
<div class="t" style="left:708.50px;top:285.84px;font-size:12px;line-height:16px;color:#000;">x</div>
<div style="left:53px;top:386px;width:291px;height:74px;box-sizing:border-box;border:1px solid #dcdcdc;"></div>
<div style="left:61px;top:385px;width:71px;height:3px;background:#fff;"></div>
<div class="t" style="left:62.00px;top:379.69px;font-size:11px;line-height:15px;color:#000;letter-spacing:-0.044px;">Other Options</div>
<div class="t" style="left:63.00px;top:414.69px;font-size:11px;line-height:15px;color:#000;letter-spacing:-0.429px;">Grid Line Color</div>
<div style="left:149px;top:410px;width:32px;height:20px;background:#d2691e;box-sizing:border-box;border:1px solid #fff;border-right-color:#a0a0a0;border-bottom-color:#a0a0a0;"></div>
<div class="t" style="left:208.00px;top:414.69px;font-size:11px;line-height:15px;color:#000;letter-spacing:-0.419px;">Header</div>
<div class="t" style="left:183.00px;top:440.69px;font-size:11px;line-height:15px;color:#000;letter-spacing:-0.306px;">Background</div>
<div class="t" style="left:267.00px;top:394.69px;font-size:11px;line-height:15px;color:#000;letter-spacing:-0.490px;">Back</div>
<div class="t" style="left:307.00px;top:394.69px;font-size:11px;line-height:15px;color:#000;letter-spacing:0.604px;">Text</div>
<div style="left:263px;top:410px;width:32px;height:20px;background:#d3d3d3;box-sizing:border-box;border:1px solid #fff;border-right-color:#a0a0a0;border-bottom-color:#a0a0a0;"></div>
<div style="left:303px;top:410px;width:32px;height:20px;background:#000;box-sizing:border-box;border:1px solid #fff;border-right-color:#a0a0a0;border-bottom-color:#a0a0a0;"></div>
<div style="left:263px;top:436px;width:32px;height:20px;background:#808080;box-sizing:border-box;border:1px solid #fff;border-right-color:#a0a0a0;border-bottom-color:#a0a0a0;"></div>
<div style="left:353px;top:386px;width:181px;height:74px;box-sizing:border-box;border:1px solid #dcdcdc;"></div>
<div style="left:360px;top:385px;width:33px;height:3px;background:#fff;"></div>
<div class="t" style="left:361.00px;top:379.69px;font-size:11px;line-height:15px;color:#000;">Level</div>
<div class="t" style="left:362.00px;top:414.69px;font-size:11px;line-height:15px;color:#000;letter-spacing:-0.112px;">Up Tick</div>
<div class="t" style="left:362.00px;top:440.69px;font-size:11px;line-height:15px;color:#000;letter-spacing:-0.092px;">Down Tick</div>
<div class="t" style="left:437.00px;top:394.69px;font-size:11px;line-height:15px;color:#000;letter-spacing:-0.490px;">Back</div>
<div class="t" style="left:478.00px;top:394.69px;font-size:11px;line-height:15px;color:#000;letter-spacing:0.604px;">Text</div>
<div style="left:433px;top:410px;width:32px;height:20px;background:#008000;box-sizing:border-box;border:1px solid #fff;border-right-color:#a0a0a0;border-bottom-color:#a0a0a0;"></div>
<div style="left:473px;top:410px;width:32px;height:20px;background:#000;box-sizing:border-box;border:1px solid #fff;border-right-color:#a0a0a0;border-bottom-color:#a0a0a0;"></div>
<div style="left:433px;top:436px;width:32px;height:20px;background:#ff0000;box-sizing:border-box;border:1px solid #fff;border-right-color:#a0a0a0;border-bottom-color:#a0a0a0;"></div>
<div style="left:473px;top:436px;width:32px;height:20px;background:#000;box-sizing:border-box;border:1px solid #fff;border-right-color:#a0a0a0;border-bottom-color:#a0a0a0;"></div>
<div style="left:543px;top:386px;width:201px;height:74px;box-sizing:border-box;border:1px solid #dcdcdc;"></div>
<div style="left:553px;top:404px;width:13px;height:13px;background:#fff;box-sizing:border-box;border:1px solid #333;"></div>
<svg style="left:553px;top:404px" width="13" height="13" viewBox="0 0 13 13"><path d="M2 6.4L5 9.3L10.6 3.2" stroke="#333" stroke-width="1.5" fill="none"/></svg>
<div class="t" style="left:570.00px;top:403.69px;font-size:11px;line-height:15px;color:#000;letter-spacing:-0.119px;">Highlight Accepted Orders</div>
<div class="t" style="left:627.00px;top:420.69px;font-size:11px;line-height:15px;color:#000;letter-spacing:-0.490px;">Back</div>
<div class="t" style="left:667.00px;top:420.69px;font-size:11px;line-height:15px;color:#000;letter-spacing:0.604px;">Text</div>
<div class="t" style="left:553.00px;top:440.69px;font-size:11px;line-height:15px;color:#000;letter-spacing:-0.147px;">Order Color</div>
<div style="left:623px;top:436px;width:32px;height:20px;background:#000;box-sizing:border-box;border:1px solid #fff;border-right-color:#a0a0a0;border-bottom-color:#a0a0a0;"></div>
<div style="left:663px;top:436px;width:32px;height:20px;background:#fff;box-sizing:border-box;border:1px solid #fff;border-right-color:#a0a0a0;border-bottom-color:#a0a0a0;"></div>
<div style="left:31px;top:481px;width:731px;height:70px;box-sizing:border-box;border:1px solid #dcdcdc;"></div>
<div style="left:372px;top:492px;width:114px;height:21px;background:#e1e1e1;box-sizing:border-box;border:1px solid #adadad;"></div>
<div class="t" style="left:397.20px;top:495.69px;font-size:11px;line-height:15px;color:#000;letter-spacing:-0.085px;">Load Default</div>
<div style="left:500px;top:492px;width:113px;height:21px;background:#e1e1e1;box-sizing:border-box;border:1px solid #adadad;"></div>
<div class="t" style="left:517.40px;top:495.69px;font-size:11px;line-height:15px;color:#000;letter-spacing:-0.087px;">Save as Default</div>
<div style="left:627px;top:492px;width:114px;height:21px;background:#e1e1e1;box-sizing:border-box;border:1px solid #adadad;"></div>
<div class="t" style="left:670.23px;top:495.69px;font-size:11px;line-height:15px;color:#000;">Apply</div>
<div style="left:500px;top:527px;width:113px;height:21px;background:#e1e1e1;box-sizing:border-box;border:1px solid #adadad;"></div>
<div class="t" style="left:548.55px;top:530.69px;font-size:11px;line-height:15px;color:#000;">OK</div>
<div style="left:627px;top:527px;width:114px;height:21px;background:#e1e1e1;box-sizing:border-box;border:1px solid #adadad;"></div>
<div class="t" style="left:667.50px;top:530.69px;font-size:11px;line-height:15px;color:#000;letter-spacing:-0.490px;">Cancel</div>
<div style="left:379px;top:151px;width:316px;height:247px;background:#f0f0f0;box-sizing:border-box;border:1px solid #7a7a7a;"></div>
<div style="left:380px;top:152px;width:314px;height:30px;background:#fff;"></div>
<svg style="left:388px;top:159px" width="15" height="13" viewBox="0 0 15 13">
<defs><linearGradient id="ig" x1="0" y1="0" x2="0" y2="1"><stop offset="0" stop-color="#3b6fb5"/><stop offset="1" stop-color="#45b05a"/></linearGradient></defs>
<rect x="0" y="0" width="15" height="1.3" fill="#6a6a6a"/><rect x="0" y="11.8" width="15" height="1.2" fill="#6a6a6a"/><rect x="13.8" y="0" width="1.2" height="13" fill="#6a6a6a"/>
<rect x="2" y="3" width="6" height="8" fill="url(#ig)"/><rect x="12" y="3" width="1" height="4" fill="#3a80b0"/><rect x="8" y="9" width="4" height="2" fill="#c4c4c4"/>
</svg>
<div class="t" style="left:407.00px;top:158.84px;font-size:12px;line-height:16px;color:#000;letter-spacing:-0.156px;">Color Selector</div>
<svg style="left:674px;top:161px" width="11" height="11" viewBox="0 0 11 11"><path d="M0 0L10 10M10 0L0 10" stroke="#000" stroke-width="1.15"/></svg>
<div style="left:382px;top:198px;width:309px;height:166px;background:#fff;box-sizing:border-box;border:1px solid #d9d9d9;"></div>
<svg style="left:380px;top:182px" width="170" height="18" viewBox="0 0 170 18">
<path d="M59.5 16.5 L63.5 6 Q64.5 3.5 67 3.5 L98 3.5 Q101 3.5 102 6 L104.5 16.5" fill="#f0f0f0" stroke="#333" stroke-width="1"/>
<path d="M106 16.5 L110.5 6 Q111.5 3.5 114 3.5 L158 3.5 Q161 3.5 162 6 L165 16.5" fill="#f0f0f0" stroke="#333" stroke-width="1"/>
<path d="M2 17 L6 5 Q7 2.5 10 2.5 L51 2.5 Q54 2.5 55 5 L59.5 17" fill="#fff" stroke="#333" stroke-width="1"/>
</svg>
<div class="t" style="left:393.30px;top:184.69px;font-size:11px;line-height:15px;color:#000;letter-spacing:-0.080px;">Palette</div>
<div class="t" style="left:451.10px;top:185.69px;font-size:11px;line-height:15px;color:#000;letter-spacing:-0.211px;">Web</div>
<div class="t" style="left:497.20px;top:185.69px;font-size:11px;line-height:15px;color:#000;letter-spacing:-0.361px;">Custom</div>
<div style="left:396px;top:209px;width:282px;height:142px;background:#888;"></div>
<div style="left:397px;top:210px;width:20px;height:20px;background:#ffc0c0;"></div>
<div style="left:417px;top:210px;width:20px;height:20px;background:#eed0c0;"></div>
<div style="left:437px;top:210px;width:20px;height:20px;background:#e0dcc0;"></div>
<div style="left:457px;top:210px;width:20px;height:20px;background:#d2ecc0;"></div>
<div style="left:477px;top:210px;width:20px;height:20px;background:#c0ffc0;"></div>
<div style="left:497px;top:210px;width:20px;height:20px;background:#c0ecd2;"></div>
<div style="left:517px;top:210px;width:20px;height:20px;background:#c0dce0;"></div>
<div style="left:537px;top:210px;width:20px;height:20px;background:#c0d0f0;"></div>
<div style="left:557px;top:210px;width:20px;height:20px;background:#c0c0ff;"></div>
<div style="left:577px;top:210px;width:20px;height:20px;background:#d0c0f0;"></div>
<div style="left:597px;top:210px;width:20px;height:20px;background:#e0c0e0;"></div>
<div style="left:617px;top:210px;width:20px;height:20px;background:#eec0d0;"></div>
<div style="left:637px;top:210px;width:20px;height:20px;background:#ffc0c0;"></div>
<div style="left:657px;top:210px;width:20px;height:20px;background:#ffffff;"></div>
<div style="left:397px;top:230px;width:20px;height:20px;background:#ff8080;"></div>
<div style="left:417px;top:230px;width:20px;height:20px;background:#f2b480;"></div>
<div style="left:437px;top:230px;width:20px;height:20px;background:#eae680;"></div>
<div style="left:457px;top:230px;width:20px;height:20px;background:#b4f080;"></div>
<div style="left:477px;top:230px;width:20px;height:20px;background:#80ff80;"></div>
<div style="left:497px;top:230px;width:20px;height:20px;background:#80f2b4;"></div>
<div style="left:517px;top:230px;width:20px;height:20px;background:#80e6ea;"></div>
<div style="left:537px;top:230px;width:20px;height:20px;background:#80b4f2;"></div>
<div style="left:557px;top:230px;width:20px;height:20px;background:#8080ff;"></div>
<div style="left:577px;top:230px;width:20px;height:20px;background:#b480f2;"></div>
<div style="left:597px;top:230px;width:20px;height:20px;background:#ea80ea;"></div>
<div style="left:617px;top:230px;width:20px;height:20px;background:#f280b4;"></div>
<div style="left:637px;top:230px;width:20px;height:20px;background:#ff8080;"></div>
<div style="left:657px;top:230px;width:20px;height:20px;background:#d3d3d3;"></div>
<div style="left:397px;top:250px;width:20px;height:20px;background:#ff4040;"></div>
<div style="left:417px;top:250px;width:20px;height:20px;background:#fa9a40;"></div>
<div style="left:437px;top:250px;width:20px;height:20px;background:#f4f040;"></div>
<div style="left:457px;top:250px;width:20px;height:20px;background:#9af440;"></div>
<div style="left:477px;top:250px;width:20px;height:20px;background:#40ff40;"></div>
<div style="left:497px;top:250px;width:20px;height:20px;background:#40fa9a;"></div>
<div style="left:517px;top:250px;width:20px;height:20px;background:#40f0f4;"></div>
<div style="left:537px;top:250px;width:20px;height:20px;background:#409af4;"></div>
<div style="left:557px;top:250px;width:20px;height:20px;background:#4040ff;"></div>
<div style="left:577px;top:250px;width:20px;height:20px;background:#9a40f4;"></div>
<div style="left:597px;top:250px;width:20px;height:20px;background:#f440f4;"></div>
<div style="left:617px;top:250px;width:20px;height:20px;background:#fa409a;"></div>
<div style="left:637px;top:250px;width:20px;height:20px;background:#ff4040;"></div>
<div style="left:657px;top:250px;width:20px;height:20px;background:#a9a9a9;"></div>
<div style="left:397px;top:270px;width:20px;height:20px;background:#ff0000;"></div>
<div style="left:417px;top:270px;width:20px;height:20px;background:#ff8000;"></div>
<div style="left:437px;top:270px;width:20px;height:20px;background:#ffff00;"></div>
<div style="left:457px;top:270px;width:20px;height:20px;background:#80ff00;"></div>
<div style="left:477px;top:270px;width:20px;height:20px;background:#00ff00;"></div>
<div style="left:497px;top:270px;width:20px;height:20px;background:#00ff80;"></div>
<div style="left:517px;top:270px;width:20px;height:20px;background:#00ffff;"></div>
<div style="left:537px;top:270px;width:20px;height:20px;background:#0080ff;"></div>
<div style="left:557px;top:270px;width:20px;height:20px;background:#0000ff;"></div>
<div style="left:577px;top:270px;width:20px;height:20px;background:#8000ff;"></div>
<div style="left:597px;top:270px;width:20px;height:20px;background:#ff00ff;"></div>
<div style="left:617px;top:270px;width:20px;height:20px;background:#ff0080;"></div>
<div style="left:637px;top:270px;width:20px;height:20px;background:#ff0000;"></div>
<div style="left:657px;top:270px;width:20px;height:20px;background:#808080;"></div>
<div style="left:397px;top:290px;width:20px;height:20px;background:#c00000;"></div>
<div style="left:417px;top:290px;width:20px;height:20px;background:#c06000;"></div>
<div style="left:437px;top:290px;width:20px;height:20px;background:#c0c000;"></div>
<div style="left:457px;top:290px;width:20px;height:20px;background:#60c000;"></div>
<div style="left:477px;top:290px;width:20px;height:20px;background:#00c000;"></div>
<div style="left:497px;top:290px;width:20px;height:20px;background:#00c060;"></div>
<div style="left:517px;top:290px;width:20px;height:20px;background:#00c0c0;"></div>
<div style="left:537px;top:290px;width:20px;height:20px;background:#0060c0;"></div>
<div style="left:557px;top:290px;width:20px;height:20px;background:#0000c0;"></div>
<div style="left:577px;top:290px;width:20px;height:20px;background:#6000c0;"></div>
<div style="left:597px;top:290px;width:20px;height:20px;background:#c000c0;"></div>
<div style="left:617px;top:290px;width:20px;height:20px;background:#c00060;"></div>
<div style="left:637px;top:290px;width:20px;height:20px;background:#c00000;"></div>
<div style="left:657px;top:290px;width:20px;height:20px;background:#555555;"></div>
<div style="left:397px;top:310px;width:20px;height:20px;background:#800000;"></div>
<div style="left:417px;top:310px;width:20px;height:20px;background:#804000;"></div>
<div style="left:437px;top:310px;width:20px;height:20px;background:#808000;"></div>
<div style="left:457px;top:310px;width:20px;height:20px;background:#408000;"></div>
<div style="left:477px;top:310px;width:20px;height:20px;background:#008000;"></div>
<div style="left:497px;top:310px;width:20px;height:20px;background:#008040;"></div>
<div style="left:517px;top:310px;width:20px;height:20px;background:#008080;"></div>
<div style="left:537px;top:310px;width:20px;height:20px;background:#004080;"></div>
<div style="left:557px;top:310px;width:20px;height:20px;background:#000080;"></div>
<div style="left:577px;top:310px;width:20px;height:20px;background:#400080;"></div>
<div style="left:597px;top:310px;width:20px;height:20px;background:#800080;"></div>
<div style="left:617px;top:310px;width:20px;height:20px;background:#800040;"></div>
<div style="left:637px;top:310px;width:20px;height:20px;background:#800000;"></div>
<div style="left:657px;top:310px;width:20px;height:20px;background:#2b2b2b;"></div>
<div style="left:397px;top:330px;width:20px;height:20px;background:#400000;"></div>
<div style="left:417px;top:330px;width:20px;height:20px;background:#402000;"></div>
<div style="left:437px;top:330px;width:20px;height:20px;background:#404000;"></div>
<div style="left:457px;top:330px;width:20px;height:20px;background:#204000;"></div>
<div style="left:477px;top:330px;width:20px;height:20px;background:#004000;"></div>
<div style="left:497px;top:330px;width:20px;height:20px;background:#004020;"></div>
<div style="left:517px;top:330px;width:20px;height:20px;background:#004040;"></div>
<div style="left:537px;top:330px;width:20px;height:20px;background:#002040;"></div>
<div style="left:557px;top:330px;width:20px;height:20px;background:#000040;"></div>
<div style="left:577px;top:330px;width:20px;height:20px;background:#200040;"></div>
<div style="left:597px;top:330px;width:20px;height:20px;background:#400040;"></div>
<div style="left:617px;top:330px;width:20px;height:20px;background:#400020;"></div>
<div style="left:637px;top:330px;width:20px;height:20px;background:#400000;"></div>
<div style="left:657px;top:330px;width:20px;height:20px;background:#000000;"></div>
<div style="left:496px;top:209px;width:22px;height:22px;box-sizing:border-box;border:1px solid #ff0000;"></div>
<div style="left:407px;top:369px;width:101px;height:25px;background:#e1e1e1;box-sizing:border-box;border:1px solid #e81123;box-shadow:inset 0 0 0 2px #0078d7;"></div>
<div class="t" style="left:449.80px;top:374.89px;font-size:11px;line-height:15px;color:#000;letter-spacing:-2.206px;">OK</div>
<div style="left:517px;top:370px;width:40px;height:24px;background:#000;"></div>
<div style="left:568px;top:370px;width:99px;height:23px;background:#e1e1e1;box-sizing:border-box;border:1px solid #adadad;"></div>
<div class="t" style="left:600.30px;top:374.89px;font-size:11px;line-height:15px;color:#000;letter-spacing:-0.530px;">Cancel</div>
</body></html>
